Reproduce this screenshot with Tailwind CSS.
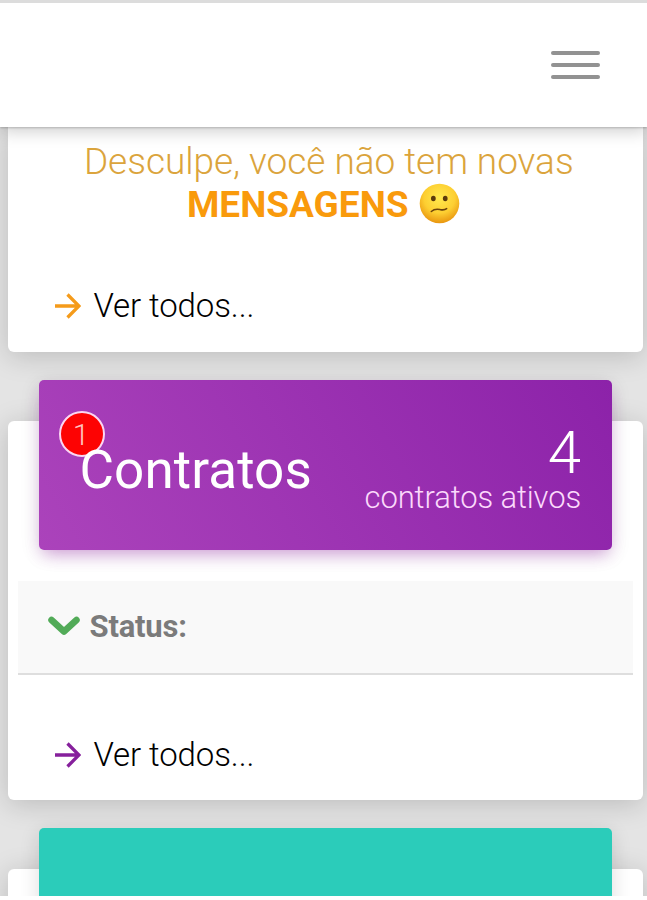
<!DOCTYPE html>
<html lang="pt-BR">
<head>
  <meta charset="utf-8">
  <meta name="viewport" content="width=device-width, initial-scale=1">
  <title>Contratos</title>
  <script src="https://cdn.jsdelivr.net/npm/@tailwindcss/browser@4"></script>
</head>
<body class="flex h-[900px] w-[647px] flex-col overflow-hidden bg-white font-['Roboto','Liberation_Sans',sans-serif] font-light">
  <!-- Navbar -->
  <header class="relative z-10 flex h-[127px] shrink-0 items-center justify-end border-t-[3px] border-[#dcdcdc] bg-white pr-[47px] shadow-[0_1px_2px_rgba(0,0,0,0.2),0_4px_16px_rgba(0,0,0,0.2)]">
    <button class="flex w-[49px] flex-col gap-2" aria-label="Menu">
      <span class="h-1 rounded-xs bg-[#929292]"></span>
      <span class="h-1 rounded-xs bg-[#929292]"></span>
      <span class="h-1 rounded-xs bg-[#929292]"></span>
    </button>
  </header>

  <main class="flex h-[769px] shrink-0 flex-col overflow-hidden bg-[#e4e4e4] pr-1 pl-[7.5px]">
    <!-- Mensagens -->
    <section class="flex h-[225px] shrink-0 flex-col rounded-b-md bg-white shadow-[0_4px_28px_rgba(0,0,0,0.18)]">
      <div class="pt-[13px] pl-[7px] text-center text-[37px] leading-[43px] text-[#dba43c]">
        <p class="tracking-[-0.04px] whitespace-nowrap">Desculpe, você não tem novas</p>
        <p class="flex items-center justify-center gap-[10px] pr-[11px] text-[#f99a0c]">
          <strong class="font-bold">MENSAGENS</strong>
          <svg class="mb-[2px] size-[41px]" viewBox="0 0 40 40" role="img" aria-label="confuso">
            <defs>
              <radialGradient id="face" cx="50%" cy="35%" r="65%">
                <stop offset="0" stop-color="#ffe94e" />
                <stop offset="0.6" stop-color="#fdcf32" />
                <stop offset="1" stop-color="#e9960f" />
              </radialGradient>
            </defs>
            <circle cx="20" cy="20" r="19.3" fill="url(#face)" />
            <ellipse cx="14" cy="15.2" rx="2.3" ry="2.7" fill="#5b3a0c" />
            <ellipse cx="25.6" cy="15.2" rx="2.3" ry="2.7" fill="#5b3a0c" />
            <path d="M12 27.800c3.500-3.200 6-2.400 9-1.800 2.500.5 4.500.2 6-1" fill="none" stroke="#6d430c" stroke-width="1.500" stroke-linecap="round" />
          </svg>
        </p>
      </div>
      <a href="#" class="mt-[60px] ml-[47px] flex items-center gap-[13px] text-[33px] leading-10 tracking-[-0.1px] text-black">
        <svg class="h-[26px] w-[26px] text-[#f59b1a]" viewBox="0 0 26 26" fill="none" stroke="currentColor" stroke-width="3.300">
          <path d="M0 13h24M12.500 1.500L24 13 12.500 24.500" />
        </svg>
        Ver todos...
      </a>
    </section>

    <!-- Contratos -->
    <section class="mt-[69px] flex h-[379px] shrink-0 flex-col rounded-md bg-white shadow-[0_4px_28px_rgba(0,0,0,0.18)]">
      <div class="relative z-[1] -mt-[41px] mr-[31px] ml-[31px] flex h-[170px] shrink-0 justify-between rounded-[5px] bg-[linear-gradient(60deg,#ab43bb,#8c22a9)] pr-[31px] pl-[41px] text-white shadow-[0_4px_20px_rgba(0,0,0,0.12),0_8px_16px_-5px_rgba(186,39,206,0.4)]">
        <span class="absolute top-[31px] left-5 flex size-[46px] items-center justify-center rounded-full border-2 border-[#fbd6f2] bg-[#fd0303] pr-px text-[30px] text-[#ffc5c0]">1</span>
        <h2 class="relative pt-[61px] text-[53px] leading-[58px] font-normal tracking-[0.1px]">Contratos</h2>
        <div class="pt-[42px] text-right">
          <p class="text-[60px] leading-[62px]">4</p>
          <p class="pt-px text-[31px] leading-[26px] tracking-[-0.13px] text-[#fbd9fb]">contratos ativos</p>
        </div>
      </div>
      <div class="mx-[10px] mt-[31px] flex h-[94px] shrink-0 items-center gap-[10px] border-b-2 border-[#dedede] bg-[#f9f9f9] pl-[30px]">
        <svg class="mb-[3px] h-5 w-8" viewBox="0 0 32 20" fill="none" stroke="#52ab58" stroke-width="6.500" stroke-linecap="round" stroke-linejoin="round">
          <path d="M3.500 4L16 15.500 28.500 4" />
        </svg>
        <strong class="text-[31px] font-bold tracking-[-0.2px] text-[#7b7b7b]">Status:</strong>
      </div>
      <a href="#" class="mt-[60px] ml-[47px] flex items-center gap-[13px] text-[33px] leading-10 tracking-[-0.1px] text-black">
        <svg class="h-[26px] w-[26px] text-[#86209c]" viewBox="0 0 26 26" fill="none" stroke="currentColor" stroke-width="3.300">
          <path d="M0 13h24M12.500 1.500L24 13 12.500 24.500" />
        </svg>
        Ver todos...
      </a>
    </section>

    <section class="mt-[69px] h-[379px] shrink-0 rounded-md bg-white shadow-[0_4px_28px_rgba(0,0,0,0.18)]">
      <div class="relative z-[1] -top-[41px] mx-[31px] h-[170px] rounded-[5px] bg-[#2bccba] shadow-[0_4px_20px_rgba(0,0,0,0.14)]"></div>
    </section>
  </main>
</body>
</html>
